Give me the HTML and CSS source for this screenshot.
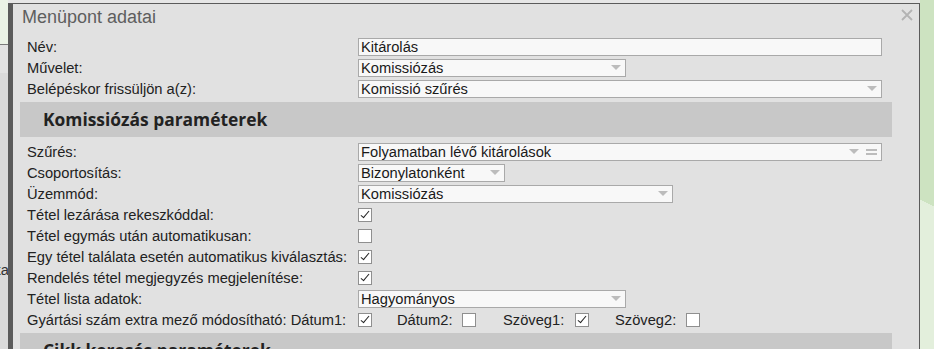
FILE: index.html
```html
<!DOCTYPE html>
<html>
<head>
  <meta charset="utf-8">
  <title>Menüpont adatai</title>
  <link rel="stylesheet" href="styles.css">
</head>
<body>

<div class="page-left">
  <div class="pl-top"></div>
  <div class="pl-mid"></div>
  <div class="pl-low">
    <div class="pl-text">ka</div>
  </div>
</div>

<div class="dialog">
  <div class="dialog-title">
    <span>Menüpont adatai</span>
    <span class="close">
      <svg width="12" height="12" viewBox="0 0 12 12"><path d="M1 1 L11 11 M11 1 L1 11" stroke="#b3b3b3" stroke-width="1.8"/></svg>
    </span>
  </div>

  <div class="dialog-body">
    <div class="form-grid">
      <label>Név:</label>
      <div><input class="field w-full" value="Kitárolás"></div>

      <label>Művelet:</label>
      <div><div class="combo w-mid"><span>Komissiózás</span><i class="arrow"></i></div></div>

      <label>Belépéskor frissüljön a(z):</label>
      <div><div class="combo w-full"><span>Komissió szűrés</span><i class="arrow"></i></div></div>
    </div>

    <div class="section-header">Komissiózás paraméterek</div>

    <div class="form-grid">
      <label>Szűrés:</label>
      <div><div class="combo w-full"><span>Folyamatban lévő kitárolások</span><span class="tools"><i class="arrow"></i><i class="lines"></i></span></div></div>

      <label>Csoportosítás:</label>
      <div><div class="combo w-small"><span>Bizonylatonként</span><i class="arrow"></i></div></div>

      <label>Üzemmód:</label>
      <div><div class="combo w-mode"><span>Komissiózás</span><i class="arrow"></i></div></div>

      <label>Tétel lezárása rekeszkóddal:</label>
      <div><span class="check on"></span></div>

      <label>Tétel egymás után automatikusan:</label>
      <div><span class="check"></span></div>

      <label>Egy tétel találata esetén automatikus kiválasztás:</label>
      <div><span class="check on"></span></div>

      <label>Rendelés tétel megjegyzés megjelenítése:</label>
      <div><span class="check on"></span></div>

      <label>Tétel lista adatok:</label>
      <div><div class="combo w-mid"><span>Hagyományos</span><i class="arrow"></i></div></div>

      <label>Gyártási szám extra mező módosítható: Dátum1:</label>
      <div class="inline-checks">
        <span class="check on"></span>
        <span class="inline-label">Dátum2:</span><span class="check"></span>
        <span class="inline-label">Szöveg1:</span><span class="check on"></span>
        <span class="inline-label">Szöveg2:</span><span class="check"></span>
      </div>
    </div>

    <div class="section-header">Cikk keresés paraméterek</div>
  </div>
</div>

<div class="page-right"></div>

</body>
</html>
```

FILE: styles.css
```css
html, body {
  margin: 0;
  height: 349px;
  overflow: hidden;
}

body {
  display: flex;
  background: #e6e6e6;
  font-family: "Liberation Sans", Arial, sans-serif;
  font-size: 14.7px;
  color: #222;
}

/* page behind the dialog */
.page-left {
  width: 8px;
  flex: none;
  display: flex;
  flex-direction: column;
  overflow: hidden;
}

.pl-top {
  height: 44px;
  background: #ebf3e6;
  border-bottom: 1px solid #7a7a7a;
}

.pl-mid {
  height: 28px;
  background: #e2e2e2;
}

.pl-low {
  flex: 1;
  background: #dadada;
  display: flex;
  justify-content: flex-end;
  padding-top: 189px;
}

.pl-text {
  white-space: nowrap;
  color: #333;
  margin-right: -1px;
}

.page-right {
  width: 14px;
  flex: none;
  background: linear-gradient(205deg, #cde3c1 0, #cde3c1 58%, #e3efdc 58%);
}

/* dialog */
.dialog {
  width: 906px;
  flex: none;
  margin-top: 3px;
  background: #e1e1e1;
  border-left: 5px solid #5b5b5b;
  border-top: 1px solid #5b5b5b;
  border-right: 1px solid #5b5b5b;
}

.dialog-title {
  height: 32px;
  display: flex;
  justify-content: space-between;
  padding: 3px 6px 0 9px;
  box-sizing: border-box;
  font-size: 18px;
  color: #5e5e5e;
}

.close {
  padding-top: 2px;
  line-height: 12px;
}

.dialog-body {
  padding: 0 27px 0 7px;
}

.form-grid {
  display: grid;
  grid-template-columns: 338px 1fr;
  grid-auto-rows: 21px;
  align-items: center;
}

.form-grid label {
  padding-left: 7px;
  white-space: nowrap;
}

.form-grid > div {
  display: flex;
  align-items: center;
}

.field, .combo {
  height: 18px;
  box-sizing: border-box;
  border: 1px solid #a9a9a9;
  background: #f8f8f8;
  font-family: "Liberation Sans", Arial, sans-serif;
  font-size: 14.7px;
  color: #1a1a1a;
  padding: 0 0 0 2px;
  margin: 0;
  outline: 0;
  line-height: 16px;
}

.combo {
  display: flex;
  justify-content: space-between;
  align-items: center;
  padding-right: 4px;
}

.w-full { width: 524px; }
.w-mid { width: 268px; }
.w-small { width: 147px; }
.w-mode { width: 315px; }

.arrow {
  width: 0;
  height: 0;
  border-left: 5px solid transparent;
  border-right: 5px solid transparent;
  border-top: 5px solid #bcbcbc;
}

.tools {
  display: flex;
  align-items: center;
  gap: 7px;
}

.lines {
  width: 11px;
  height: 2px;
  border-top: 2px solid #bcbcbc;
  border-bottom: 2px solid #bcbcbc;
}

.section-header {
  height: 35px;
  background: #c8c8c8;
  margin: 3px 0 4px;
  padding-left: 23px;
  font-family: "Open Sans", "Noto Sans", sans-serif;
  font-weight: 700;
  font-size: 17.4px;
  line-height: 35px;
  color: #222;
}

.check {
  width: 14px;
  height: 14px;
  box-sizing: border-box;
  border: 1px solid #8f8f8f;
  background: #fff;
  display: inline-flex;
  align-items: center;
  justify-content: center;
  flex: none;
}

.check.on::after {
  content: "";
  width: 3px;
  height: 8px;
  border-right: 1.4px solid #222;
  border-bottom: 1.4px solid #222;
  transform: rotate(40deg);
  margin-top: -2px;
}

.inline-checks .inline-label {
  margin-left: 25px;
  width: 65px;
}

.inline-checks .inline-label + .check + .inline-label {
  margin-left: 27px;
  width: 72px;
}

.inline-checks .inline-label + .check + .inline-label + .check + .inline-label {
  margin-left: 26px;
  width: 71px;
}
```
